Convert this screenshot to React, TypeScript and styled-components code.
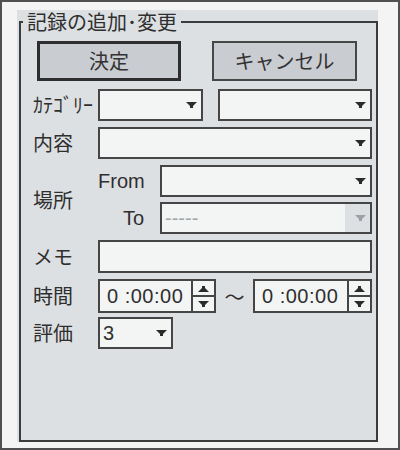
import styled, { createGlobalStyle } from "styled-components";

const GlobalStyle = createGlobalStyle`
    html, body {
        margin: 0;
        padding: 0;
        background: #f3f4f3;
    }
    body {
        font-family: "Noto Sans CJK JP", "Noto Sans", sans-serif;
    }
`

function Arrow({ up, color = "#2b2b2b" }: { up?: boolean; color?: string }) {
    return (
        <svg width="11" height="7" viewBox="0 0 11 7" style={{ display: "block" }}>
            <polygon
                points="0,0 11,0 7,4 7,6 4,6 4,4"
                fill={color}
                transform={up ? "rotate(180 5.5 3.5)" : undefined}
            />
        </svg>
    );
}

interface TComboProps {
    width?: number,
    text?: string,
    disabled?: boolean
}

function Combo({ width, text, disabled }: TComboProps) {
    return (
        <ComboBox $w={width}>
            <ComboText $disabled={disabled}>{text}</ComboText>
            <ComboButton $disabled={disabled}>
                <Arrow color={disabled ? "#9da1a6" : "#2b2b2b"} />
            </ComboButton>
        </ComboBox>
    );
}

function Spin({ width }: { width: number }) {
    return (
        <SpinBox $w={width}>
            <SpinText>0 :00:00</SpinText>
            <SpinButtons>
                <SpinBtn><Arrow up /></SpinBtn>
                <SpinBtn $lower><Arrow /></SpinBtn>
            </SpinButtons>
        </SpinBox>
    );
}

export default function App() {
    return (
        <>
            <GlobalStyle />
            <Window>
                <Panel>
                    <Group>
                        <Legend>記録の追加･変更</Legend>
                        <Form>
                            <ButtonRow>
                                <Btn $primary>決定</Btn>
                                <Btn>キャンセル</Btn>
                            </ButtonRow>

                            <Row $top={8} $h={32}>
                                <Label>ｶﾃｺﾞﾘｰ</Label>
                                <Pair>
                                    <Combo width={105} />
                                    <Combo />
                                </Pair>
                            </Row>

                            <Row $top={6} $h={32}>
                                <Label>内容</Label>
                                <Combo />
                            </Row>

                            <Row $top={6}>
                                <Label>場所</Label>
                                <PlaceGrid>
                                    <SubLabel>From</SubLabel>
                                    <Combo />
                                    <SubLabel>To</SubLabel>
                                    <Combo text="-----" disabled />
                                </PlaceGrid>
                            </Row>

                            <Row $top={6} $h={33}>
                                <Label>メモ</Label>
                                <TextBox />
                            </Row>

                            <Row $top={6} $h={34}>
                                <Label>時間</Label>
                                <TimeLine>
                                    <Spin width={118} />
                                    <Tilde>～</Tilde>
                                    <Spin width={119} />
                                </TimeLine>
                            </Row>

                            <Row $top={4} $h={32}>
                                <Label>評価</Label>
                                <Combo width={75} text="3" />
                            </Row>
                        </Form>
                    </Group>
                </Panel>
            </Window>
        </>
    );
}

const Window = styled.div`
    width: 400px;
    height: 450px;
    box-sizing: border-box;
    border: 2px solid #505050;
    background: #f3f4f3;
    padding: 8px 0 0 15px;
`

const Panel = styled.div`
    width: 361px;
    height: 432px;
    background: #dde0e3;
    display: flex;
`

const Group = styled.fieldset`
    flex: 1;
    min-width: 0;
    margin: 0 0 0 2px;
    padding: 0;
    border: 2px solid #3c3c3c;
    box-sizing: border-box;
`

const Legend = styled.legend`
    margin-left: 2px;
    padding: 0 4px;
    font-size: 20px;
    line-height: 24px;
    color: #2f2f2f;
`

const Form = styled.div`
    display: flex;
    flex-direction: column;
    padding: 7px 4px 0 12px;
`

const ButtonRow = styled.div`
    display: flex;
    gap: 31px;
    margin-left: 4px;
`

const Btn = styled.button<{ $primary?: boolean }>`
    width: ${({ $primary }) => ($primary ? 144 : 145)}px;
    height: 40px;
    box-sizing: border-box;
    padding: 0;
    border: ${({ $primary }) => ($primary ? "3px solid #2e2e2e" : "2px solid #474747")};
    background: #c9ccd1;
    color: #333333;
    font-family: "Noto Sans CJK JP", sans-serif;
    font-size: 20px;
    line-height: 20px;
`

const Row = styled.div<{ $top: number; $h?: number }>`
    display: grid;
    grid-template-columns: 65px 1fr;
    align-items: center;
    margin-top: ${({ $top }) => $top}px;
    height: ${({ $h }) => ($h ? `${$h}px` : "auto")};
`

const Label = styled.span`
    font-size: 20px;
    line-height: 20px;
    color: #2f2f2f;
    white-space: nowrap;
`

const Pair = styled.div`
    display: flex;
    gap: 15px;
    height: 100%;
`

const ComboBox = styled.div<{ $w?: number }>`
    display: flex;
    align-items: stretch;
    box-sizing: border-box;
    height: 100%;
    ${({ $w }) => ($w ? `width: ${$w}px;` : "flex: 1;")}
    border: 2px solid #454545;
    background: #f3f5f4;
`

const ComboText = styled.div<{ $disabled?: boolean }>`
    flex: 1;
    display: flex;
    align-items: center;
    padding-left: 3px;
    font-family: "Liberation Sans", sans-serif;
    font-size: 20px;
    color: ${({ $disabled }) => ($disabled ? "#a3a6a9" : "#2f2f2f")};
`

const ComboButton = styled.div<{ $disabled?: boolean }>`
    width: 25px;
    box-sizing: border-box;
    display: flex;
    align-items: center;
    justify-content: flex-end;
    padding-right: 4px;
    background: ${({ $disabled }) => ($disabled ? "#dde0e3" : "transparent")};
`

const PlaceGrid = styled.div`
    display: grid;
    grid-template-columns: 62px 1fr;
    grid-auto-rows: 32px;
    row-gap: 5px;
    align-items: center;
`

const SubLabel = styled.span`
    text-align: right;
    padding-right: 16px;
    font-family: "Liberation Sans", sans-serif;
    font-size: 20px;
    color: #2f2f2f;
`

const TextBox = styled.div`
    height: 100%;
    box-sizing: border-box;
    border: 2px solid #454545;
    background: #f3f5f4;
`

const TimeLine = styled.div`
    display: flex;
    height: 100%;
`

const SpinBox = styled.div<{ $w: number }>`
    display: flex;
    width: ${({ $w }) => $w}px;
    height: 100%;
    box-sizing: border-box;
    border: 2px solid #454545;
    background: #f3f5f4;
`

const SpinText = styled.div`
    flex: 1;
    display: flex;
    align-items: center;
    padding-left: 7px;
    font-family: "Liberation Sans", sans-serif;
    font-size: 20px;
    letter-spacing: 0.5px;
    color: #2f2f2f;
`

const SpinButtons = styled.div`
    width: 21px;
    display: flex;
    flex-direction: column;
    border-left: 2px solid #454545;
`

const SpinBtn = styled.div<{ $lower?: boolean }>`
    flex: 1;
    display: flex;
    align-items: center;
    justify-content: center;
    ${({ $lower }) => ($lower ? "border-top: 2px solid #454545;" : "")}
`

const Tilde = styled.span`
    width: 37px;
    display: flex;
    align-items: center;
    justify-content: center;
    font-size: 20px;
    color: #2f2f2f;
`
